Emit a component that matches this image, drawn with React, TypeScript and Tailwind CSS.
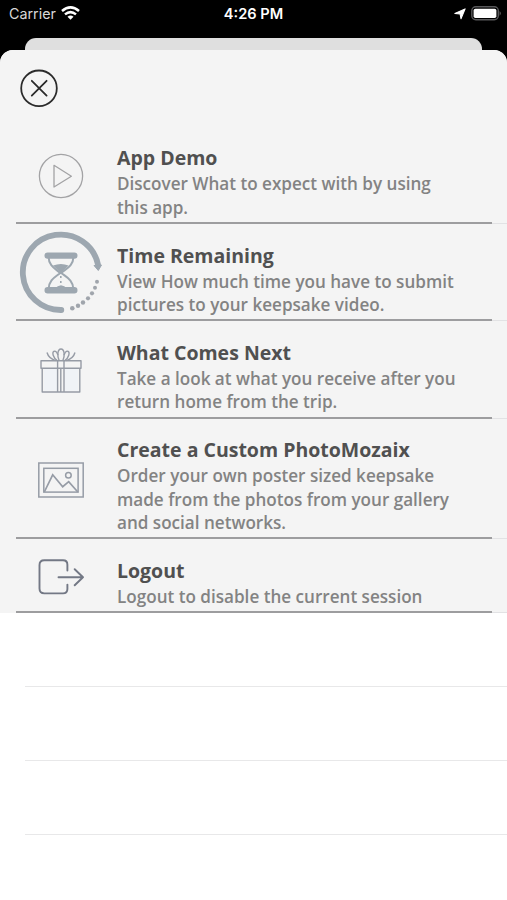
import type { FC, ReactNode } from "react";

const PlayIcon: FC = () => (
  <svg width="46" height="46" viewBox="0 0 46 46" fill="none" stroke="#a3a3a5" strokeWidth="1.3">
    <circle cx="23" cy="23" r="21.6" />
    <path d="M16 12.3L33.4 23.2L16 34Z" strokeLinejoin="round" />
  </svg>
);

const HourglassIcon: FC = () => (
  <svg width="84" height="84" viewBox="0 0 84 84" fill="none">
    <path d="M42.3 79A38 37.7 0 1 1 79 33.5" stroke="#9da7b0" strokeWidth="5.8" strokeLinecap="round" />
    <path d="M75 34.5L82.5 34L79.3 39.5Z" fill="#9da7b0" stroke="#9da7b0" strokeLinejoin="round" />
    <g fill="#a0a5ac">
      <circle cx="53.3" cy="77.2" r="2.3" />
      <circle cx="59" cy="74.8" r="2.2" />
      <circle cx="64" cy="71.5" r="2.2" />
      <circle cx="69" cy="67.3" r="2.1" />
      <circle cx="73" cy="62.3" r="2.1" />
      <circle cx="76" cy="56.7" r="2" />
      <circle cx="78" cy="50.8" r="2" />
    </g>
    <g stroke="#9da7b0">
      <path d="M28.7 24.6H55.3M28.7 59.3H55.3" strokeWidth="6.4" strokeLinecap="round" />
      <path
        d="M29.6 26C29.6 35 37 38 41.2 42C36.5 46 30 48.5 29.6 58M54.4 26C54.4 35 46.5 38 42.3 42C47 46 54 48.5 54.4 58"
        strokeWidth="2"
      />
      <path d="M41.8 45V55" strokeWidth="1.6" strokeDasharray="2 3" />
    </g>
    <path d="M34 34.5Q42 31.5 49.5 34.5Q46 38.5 42 42Q38 38.5 34 34.5Z" fill="#9da7b0" />
    <path d="M36 57.5Q38.5 54.5 42 54.3Q45.5 54.5 48 57.5Z" fill="#9da7b0" />
  </svg>
);

const GiftIcon: FC = () => (
  <svg width="44" height="48" viewBox="0 0 44 48" fill="none" stroke="#969ba5" strokeWidth="1.4" strokeLinejoin="round">
    <path d="M5 22H18V43.5H5ZM26 22H39V43.5H26Z" fill="#f0f3f7" stroke="none" />
    <path d="M3.2 21.2V45H40.8V21.2M2 13.8H42V21.2H2ZM18.6 13.8V45M21.8 21.2V45M25 13.8V45" />
    <path d="M18.8 14C14 11.5 12.5 4.5 15.3 4.2C17.2 3.8 18.4 6.5 19 8M25.2 14C30 11.5 31.4 4.5 28.7 4.2C26.8 3.8 25.6 6.5 25 8" />
    <path d="M20.3 14C17.9 9 18.4 2 22 2S26.1 9 23.7 14M16.5 13.6C11.8 12 9 9 8 5.5M27.5 13.6C32.2 12 35 9 36 5.5" />
  </svg>
);

const PhotoIcon: FC = () => (
  <svg width="46" height="36" viewBox="0 0 46 36" fill="none" stroke="#969ca6" strokeWidth="1.5">
    <rect x="0.8" y="1" width="44.4" height="34" />
    <rect x="5.8" y="6.3" width="34.3" height="23.8" />
    <path d="M6.3 30L14.7 12.8L24.7 24.7L30.7 19.7L39.8 30" strokeWidth="1.7" />
    <circle cx="30.4" cy="13.3" r="2.8" />
  </svg>
);

const LogoutIcon: FC = () => (
  <svg width="46" height="36" viewBox="0 0 46 36" fill="none" stroke="#737885" strokeWidth="1.9" strokeLinecap="round" strokeLinejoin="round">
    <path d="M29.4 11.5V5.8Q29.4 1.3 25 1.3H6.3Q1.5 1.3 1.5 6V29.6Q1.5 34.4 6.3 34.4H25Q29.4 34.4 29.4 30V25.6" />
    <path d="M20.5 18.2H45M36.7 10.2L45 18.2L36.7 26.3" />
  </svg>
);

type MenuItem = {
  title: string;
  lines: string[];
  height: string;
  icon: ReactNode;
};

const items: MenuItem[] = [
  {
    title: "App Demo",
    lines: ["Discover What to expect with by using", "this app."],
    height: "h-[97.3px]",
    icon: <PlayIcon />,
  },
  {
    title: "Time Remaining",
    lines: ["View How much time you have to submit", "pictures to your keepsake video."],
    height: "h-[97.3px]",
    icon: <HourglassIcon />,
  },
  {
    title: "What Comes Next",
    lines: ["Take a look at what you receive after you", "return home from the trip."],
    height: "h-[97.3px]",
    icon: <GiftIcon />,
  },
  {
    title: "Create a Custom PhotoMozaix",
    lines: ["Order your own poster sized keepsake", "made from the photos from your gallery", "and social networks."],
    height: "h-[120.7px]",
    icon: <PhotoIcon />,
  },
  {
    title: "Logout",
    lines: ["Logout to disable the current session"],
    height: "h-[74px]",
    icon: <LogoutIcon />,
  },
];

const StatusBar: FC = () => (
  <div className="grid h-[38px] grid-cols-3 px-2 pt-[5px] font-['Inter','Liberation_Sans',sans-serif] text-[14px] leading-[18px] text-white">
    <div className="flex items-start gap-1.5 pl-px">
      <span className="text-[14.3px] text-[#d8d8d8]">Carrier</span>
      <svg className="-ml-px mt-px" width="19" height="14" viewBox="0 0 19 14" fill="none" stroke="white" strokeWidth="2.5">
        <path d="M1 5Q9.5 -2.3 18 5" />
        <path d="M4 8.4Q9.5 3.8 15 8.4" />
        <path d="M6.5 10.8Q9.5 8.3 12.5 10.8L9.5 13.8Z" fill="white" stroke="none" />
      </svg>
    </div>
    <span className="text-center text-[14.6px] font-semibold whitespace-nowrap">4:26 PM</span>
    <div className="flex items-start justify-end gap-[5px]">
      <svg className="mt-[3px]" width="12" height="12" viewBox="0 0 11 11" fill="white" stroke="white" strokeWidth="1" strokeLinejoin="round">
        <path d="M10.2 0.8L6.4 9.8L5.6 5.5L0.8 5.1Z" />
      </svg>
      <svg className="mt-px mr-[-3px]" width="31" height="15" viewBox="0 0 31 15" fill="none">
        <rect x="0.8" y="0.8" width="26.5" height="13" rx="4" stroke="#58585a" strokeWidth="1.4" />
        <rect x="2.6" y="2.7" width="22.8" height="9.4" rx="1.8" fill="white" />
        <path d="M28.6 5Q31 7.3 28.6 9.7Z" fill="#666" />
      </svg>
    </div>
  </div>
);

const MenuRow: FC<MenuItem> = ({ title, lines, height, icon }) => (
  <li className={`flex flex-col ${height}`}>
    <div className="flex min-h-0 flex-1">
      <div className="flex w-[117px] shrink-0 items-center justify-center pt-[3px] pl-[5px]">{icon}</div>
      <div className="pt-[17.7px] whitespace-nowrap">
        <h2 className="text-[19.5px] leading-[27.2px] font-bold text-[#505050]">{title}</h2>
        <div className="pt-[0.8px]">
          {lines.map((line) => (
            <p key={line} className="text-[17.1px] leading-[23.2px] font-semibold text-[#838383]">
              {line}
            </p>
          ))}
        </div>
      </div>
    </div>
    <div className="flex h-[2px] shrink-0 items-end">
      <div className="ml-4 h-[2px] w-[476px] bg-[#9d9d9f]" />
      <div className="h-px flex-1 bg-[#e2e2e4]" />
    </div>
  </li>
);

const App: FC = () => {
  return (
    <div className="flex h-[900px] w-[507px] flex-col overflow-hidden bg-black font-['Open_Sans','Noto_Sans',sans-serif]">
      <StatusBar />
      <div className="mx-[25px] h-3 shrink-0 rounded-t-[11px] bg-[#dfdfdf]" />
      <main className="flex-1 overflow-hidden rounded-t-[13px] bg-white">
        <header className="h-[76.8px] bg-[#f4f4f4] pt-[19px] pl-5">
          <button type="button" aria-label="Close" className="block">
            <svg width="38" height="38" viewBox="0 0 38 38" fill="none" stroke="#2b2b2b" strokeWidth="1.8" strokeLinecap="round">
              <circle cx="19" cy="19.3" r="17.8" />
              <path d="M11.8 11.8L26.6 26.6M26.6 11.8L11.8 26.6" />
            </svg>
          </button>
        </header>
        <ul className="bg-[#f4f4f4]">
          {items.map((item) => (
            <MenuRow key={item.title} {...item} />
          ))}
        </ul>
        {/* empty table rows */}
        <div className="ml-[25px]">
          <div className="h-[74px] border-b border-[#e8e8e9]" />
          <div className="h-[74px] border-b border-[#e8e8e9]" />
          <div className="h-[74px] border-b border-[#e8e8e9]" />
        </div>
      </main>
    </div>
  );
};

export default App;
